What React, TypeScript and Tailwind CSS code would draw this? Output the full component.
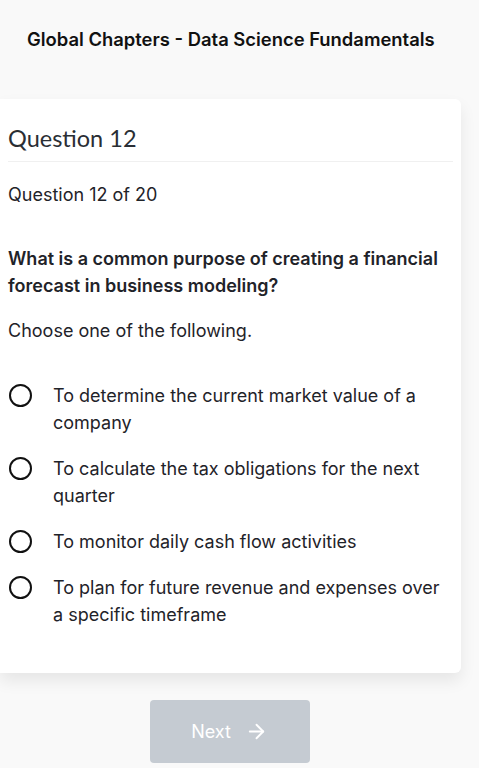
import { ArrowRight } from "lucide-react";

const options = [
  "To determine the current market value of a company",
  "To calculate the tax obligations for the next quarter",
  "To monitor daily cash flow activities",
  "To plan for future revenue and expenses over a specific timeframe",
];

const Radio = () => (
  <span className="mt-[2px] block h-[23px] w-[23px] shrink-0 rounded-full border-[2.5px] border-[#111]" />
);

export default function App() {
  return (
    <div className="min-h-[768px] bg-[#f9f9f9] font-['Inter',sans-serif] text-[#1f2329]">
      <h1 className="pl-[27px] pt-[27px] text-[18.4px] font-semibold leading-[24px] text-[#111]">
        Global Chapters - Data Science Fundamentals
      </h1>

      <div className="mr-[18px] mt-[48px] rounded-r-md bg-white pb-[45px] pl-[8px] pr-[8px] pt-[22px] shadow-[0_8px_16px_rgba(0,0,0,0.08)]">
        <h2 className="font-['Lato',sans-serif] text-[23.5px] font-normal leading-[34px] text-[#2a2e34]">
          Question 12
        </h2>
        <div className="mt-[6px] h-px bg-[#f0f0f0]" />

        <p className="mt-[19px] text-[18px] leading-[27px]">Question 12 of 20</p>

        <p className="mt-[37px] text-[18px] font-semibold leading-[27px]">
          What is a common purpose of creating a financial forecast in business modeling?
        </p>

        <p className="mt-[18px] text-[18px] leading-[27px]">Choose one of the following.</p>

        <ul className="mt-[38px] flex flex-col gap-[19px]">
          {options.map((opt) => (
            <li key={opt} className="flex items-start gap-[21px] pl-[1px]">
              <Radio />
              <span className="text-[18px] leading-[27px]">{opt}</span>
            </li>
          ))}
        </ul>
      </div>

      <div className="mt-[27px] flex justify-center pr-[20px]">
        <button className="flex h-[63px] w-[160px] items-center justify-center gap-[14px] rounded-[4px] bg-[#c5cbd2] text-[18px] text-white">
          Next
          <ArrowRight size={23} strokeWidth={2} />
        </button>
      </div>
    </div>
  );
}
